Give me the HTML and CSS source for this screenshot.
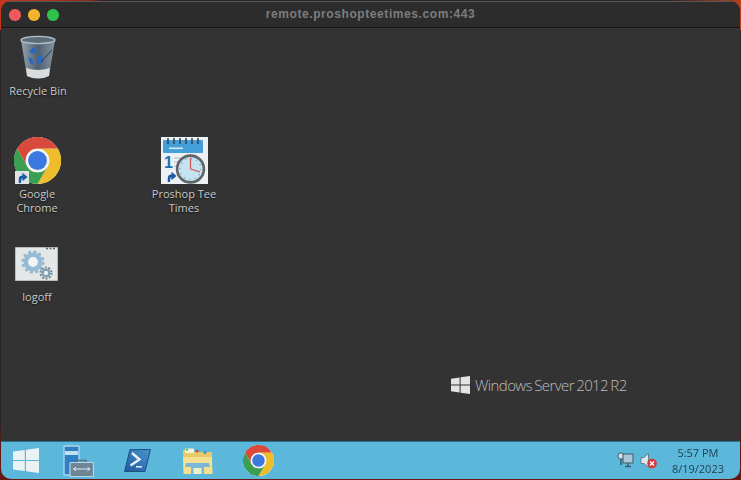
FILE: index.html
```html
<!DOCTYPE html>
<html lang="en">
<head>
    <meta charset="UTF-8">
    <title>remote.proshopteetimes.com:443</title>
    <link rel="stylesheet" href="styles.css">
</head>
<body>
    <svg class="defs" width="0" height="0">
        <symbol id="chrome" viewBox="0 0 48 48">
            <circle cx="24" cy="24" r="24" fill="#fff"/>
            <path d="M3.2 12A24 24 0 0 1 44.8 12H24A12 12 0 0 0 13.6 30Z" fill="#d94a3c"/>
            <path d="M44.8 12A24 24 0 0 1 24 48L34.4 30A12 12 0 0 0 24 12Z" fill="#eebd2c"/>
            <path d="M3.2 12L13.6 30A12 12 0 0 0 34.4 30L24 48A24 24 0 0 1 3.2 12Z" fill="#3a9f50"/>
            <circle cx="24" cy="24" r="12" fill="#f4f4f4"/>
            <circle cx="24" cy="24" r="9.6" fill="#3b78e0"/>
        </symbol>
        <symbol id="shortcut" viewBox="0 0 14 14">
            <path d="M3.5 13V8.5C3.5 6 5.2 4.8 7.5 4.8V2L13 6.5L7.5 11V8.2C6.4 8.2 6 9.5 6 13Z" fill="#1d5aa6"/>
        </symbol>
    </svg>

    <div class="window">
        <header class="titlebar">
            <div class="lights">
                <span class="light red"></span>
                <span class="light amber"></span>
                <span class="light green"></span>
            </div>
            <h1>remote.proshopteetimes.com:443</h1>
        </header>

        <main class="desktop">
            <!-- desktop icons sit wherever the user dropped them -->
            <div class="icon icon-bin">
                <svg width="38" height="46" viewBox="0 0 38 46">
                    <defs>
                        <linearGradient id="binBody" x1="0" x2="1" y1="0" y2="0">
                            <stop offset="0" stop-color="#95a4ae"/>
                            <stop offset=".5" stop-color="#4f6072"/>
                            <stop offset="1" stop-color="#87959f"/>
                        </linearGradient>
                    </defs>
                    <path d="M2 5L8 41Q19 46 30 41L36 5Z" fill="url(#binBody)"/>
                    <path d="M7 33Q19 37 31 33L30 41Q19 46 8 41Z" fill="#d8dcde"/>
                    <path d="M10 17L14 12L18 15L15 19ZM18 22L23 20L24 27L19 29ZM9 22L13 24L15 30L11 28Z" fill="#2a66c4"/>
                    <path d="M22 27L33 15" stroke="#2f3a44" stroke-width="1"/>
                    <ellipse cx="19" cy="5" rx="17" ry="3.6" fill="#5c6c7a" stroke="#b4c0c8" stroke-width="1.4"/>
                </svg>
                <span>Recycle Bin</span>
            </div>

            <div class="icon icon-chrome">
                <div class="icon-art">
                    <svg class="chrome-big"><use href="#chrome"/></svg>
                    <div class="badge-box">
                        <svg class="badge"><use href="#shortcut"/></svg>
                    </div>
                </div>
                <span>Google<br>Chrome</span>
            </div>

            <div class="icon icon-tee">
                <div class="icon-art">
                    <svg width="47" height="47" viewBox="0 0 47 47">
                        <rect width="47" height="47" fill="#eef1f3"/>
                        <rect x="2" y="3" width="40" height="13" rx="1" fill="#45a0da"/>
                        <path d="M7 1V7M13 1V7M19 1V7M25 1V7M31 1V7M37 1V7" stroke="#33424e" stroke-width="1.5"/>
                        <rect x="8" y="10.5" width="14" height="1.6" fill="#d5ecf8"/>
                        <path d="M13 21H26M13 25H18M13 29H17" stroke="#c3cad0" stroke-width="1.4"/>
                        <text x="3" y="31" class="cal-day">1</text>
                        <circle cx="29.5" cy="32" r="13.4" fill="#c4e2f0" stroke="#5f6468" stroke-width="2.6"/>
                        <circle cx="29.5" cy="32" r="10.5" fill="none" stroke="#7f98a8" stroke-width="1.4" stroke-dasharray="1 4.5"/>
                        <path d="M29.5 32V21M29.5 32L39 35" stroke="#d0574e" stroke-width="1.2"/>
                    </svg>
                    <svg class="badge plain"><use href="#shortcut"/></svg>
                </div>
                <span>Proshop Tee<br>Times</span>
            </div>

            <div class="icon icon-logoff">
                <svg width="43" height="34" viewBox="0 0 43 34">
                    <rect width="43" height="34" fill="#e4e7e8" stroke="#8b9094" stroke-width="1"/>
                    <path d="M31 1.5H41" stroke="#60666a" stroke-width="1.4" stroke-dasharray="2 1.5"/>
                    <circle cx="18" cy="15" r="10.3" fill="none" stroke="#9db6c8" stroke-width="2.6" stroke-dasharray="3 2.4"/>
                    <circle cx="18" cy="15" r="7.2" fill="#f2f5f6" stroke="#94bcd8" stroke-width="4.6"/>
                    <circle cx="31" cy="26" r="3.4" fill="#e8eef0" stroke="#7f9eb4" stroke-width="2.4"/>
                    <circle cx="31" cy="26" r="5.6" fill="none" stroke="#74858f" stroke-width="1.8" stroke-dasharray="2 1.5"/>
                </svg>
                <span>logoff</span>
            </div>

            <div class="brand">
                <svg width="19" height="18" viewBox="0 0 19 18">
                    <path d="M0 2.8L8.6 1.4V8.5H0ZM9.6 1.2L19 0V8.5H9.6ZM0 9.5H8.6V16.6L0 15.2ZM9.6 9.5H19V18L9.6 16.8Z" fill="#e4e4e4"/>
                </svg>
                <span>Windows Server 2012 R2</span>
            </div>
        </main>

        <footer class="taskbar">
            <svg class="start" width="26" height="25" viewBox="0 0 26 25">
                <path d="M0 3.6L11.8 2V12H0ZM13 1.8L26 0V12H13ZM0 13H11.8V23L0 21.4ZM13 13H26V25L13 23.2Z" fill="#eaf2f4"/>
            </svg>

            <svg class="server" width="31" height="32" viewBox="0 0 31 32">
                <rect x="1" y="1" width="15" height="29" rx="1" fill="#2f7fc4" stroke="#a6d8ee" stroke-width="1.4"/>
                <rect x="2" y="6" width="13" height="4" fill="#bfe2f2"/>
                <path d="M14 18V15.5H23V18" fill="none" stroke="#5b6e7c" stroke-width="1.6"/>
                <rect x="7" y="17.5" width="23.5" height="14" rx="1" fill="#6e8596" stroke="#b9d6e4" stroke-width="1.2"/>
                <path d="M10.5 24H27M10.5 24L13 22.2M10.5 24L13 25.8M27 24L24.5 22.2M27 24L24.5 25.8" stroke="#dfeaf0" stroke-width="1" fill="none"/>
            </svg>

            <svg class="shell" width="27" height="23" viewBox="0 0 27 23">
                <defs>
                    <linearGradient id="shellFill" x1="0" x2="1" y1="1" y2="0">
                        <stop offset="0" stop-color="#1f5a9e"/>
                        <stop offset="1" stop-color="#4b94d0"/>
                    </linearGradient>
                </defs>
                <path d="M6 0.6H26.4L21 22.4H0.6Z" fill="url(#shellFill)" stroke="#1a4d80" stroke-width="1"/>
                <path d="M8 4L15.5 10.5L6.5 16.5" fill="none" stroke="#e8f2f8" stroke-width="2.4"/>
                <path d="M12 17.8H18" stroke="#e8f2f8" stroke-width="1.6"/>
            </svg>

            <svg class="explorer" width="31" height="28" viewBox="0 0 31 28">
                <path d="M1 3H11L13 5H30V26H2Z" fill="#e8c96c"/>
                <path d="M3 1.5H12V6H3Z" fill="#f4f1d8"/>
                <circle cx="5" cy="2.6" r="1.2" fill="#59b44a"/>
                <circle cx="15" cy="4.2" r="1.4" fill="#c9463a"/>
                <circle cx="23" cy="5.6" r="1.4" fill="#3e86c8"/>
                <path d="M1 10H30L30.5 27H1.5Z" fill="#f5e08f"/>
                <path d="M4 16H27L28 20H22V27H9V20H3Z" fill="#7db7d6"/>
                <rect x="11.5" y="21" width="8" height="6" fill="#e9f1c9"/>
            </svg>

            <svg class="chrome-small"><use href="#chrome"/></svg>

            <div class="tray">
                <svg width="17" height="17" viewBox="0 0 17 17">
                    <circle cx="4" cy="4" r="3.2" fill="#cfdfe6" stroke="#3f5a68" stroke-width="1"/>
                    <path d="M4 7V13" stroke="#3f5a68" stroke-width="1.6"/>
                    <rect x="6" y="2" width="10" height="9" fill="#a9c6d4" stroke="#3f5a68" stroke-width="1"/>
                    <path d="M8 14.5H14M11 11V14.5" stroke="#3f5a68" stroke-width="1.4"/>
                </svg>
                <svg width="17" height="17" viewBox="0 0 17 17">
                    <path d="M1 5.5H4L8.5 1.5V15.5L4 11.5H1Z" fill="#dbe6ea" stroke="#55707e" stroke-width=".8"/>
                    <circle cx="12" cy="11.5" r="4.8" fill="#d8383a"/>
                    <path d="M10 9.5L14 13.5M14 9.5L10 13.5" stroke="#fff" stroke-width="1.3"/>
                </svg>
                <div class="clock">
                    <span>5:57 PM</span>
                    <span>8/19/2023</span>
                </div>
            </div>
        </footer>
    </div>
</body>
</html>
```

FILE: styles.css
```css
html, body {
    margin: 0;
    padding: 0;
    height: 100%;
    overflow: hidden;
}
body {
    background: linear-gradient(90deg, #c23a1e 0, #8f2a18 12%, #2a2224 14%, #2a2224 90%, #b8401c 100%) top / 100% 30px no-repeat,
        linear-gradient(#2c2426 0, #2c2426 88%, #6a1612 94%);
    font-family: "Open Sans", "Liberation Sans", sans-serif;
}
.defs {
    position: absolute;
}
.window {
    box-sizing: border-box;
    height: 478px;
    margin: 1px 1px 0 1px;
    display: flex;
    flex-direction: column;
    background-color: #333;
    border-radius: 10px;
    overflow: hidden;
    filter: blur(0.6px);
}
.titlebar {
    flex: 0 0 27px;
    display: flex;
    align-items: center;
    position: relative;
    background-color: #2c2c2c;
    border-top: 1px solid #585858;
    border-bottom: 1px solid #161616;
    box-sizing: border-box;
    height: 28px;
}
.titlebar h1 {
    flex: 1;
    margin: 0 0 2px;
    text-align: center;
    font: bold 12px "Liberation Sans", Arial, sans-serif;
    letter-spacing: 0.58px;
    color: #7d7d7d;
}
.lights {
    position: absolute;
    left: 8px;
    top: 7px;
    display: flex;
    gap: 7.5px;
}
.light {
    width: 11.5px;
    height: 11.5px;
    border-radius: 50%;
}
.light.red { background-color: #ed5a5c; }
.light.amber { background-color: #f2b32e; }
.light.green { background-color: #2fc24a; }

.desktop {
    flex: 1;
    position: relative;
    background-color: #333;
}
.icon {
    position: absolute;
    width: 76px;
    display: flex;
    flex-direction: column;
    align-items: center;
    color: #c9c9c9;
    font-size: 11px;
    line-height: 14px;
    text-align: center;
    text-shadow: 0 1px 2px #111;
}
.icon svg {
    display: block;
}
.icon-art {
    position: relative;
}
.icon-bin { left: -1px; top: 7px; }
.icon-bin span { margin-top: 3px; }
.icon-chrome { left: -2px; top: 109px; }
.icon-chrome span, .icon-tee span { margin-top: 3px; }
.icon-tee { left: 145px; top: 109px; }
.icon-logoff { left: -2px; top: 219px; }
.icon-logoff span { margin-top: 9px; }
.icon-logoff svg { margin-right: 2px; }
.chrome-big {
    width: 47px;
    height: 47px;
}
.badge-box {
    position: absolute;
    left: 1px;
    bottom: 0;
    width: 14px;
    height: 13px;
    background-color: #dfe3e6;
}
.badge {
    width: 14px;
    height: 13px;
}
.badge.plain {
    position: absolute;
    left: 3px;
    bottom: 1px;
}
.cal-day {
    font: bold 16px "Liberation Sans", Arial, sans-serif;
    fill: #1d6fb0;
    text-shadow: none;
}
.brand {
    position: absolute;
    left: 450px;
    top: 347px;
    display: flex;
    align-items: center;
    gap: 5px;
    color: #bdbdbd;
    font-size: 15px;
    font-weight: 300;
    letter-spacing: -0.6px;
    word-spacing: -1px;
}

.taskbar {
    flex: 0 0 38px;
    display: flex;
    align-items: center;
    background-color: #5cb8da;
    border-top: 1px solid #2a6f8c;
    box-sizing: border-box;
    height: 38px;
}
.taskbar svg {
    flex: none;
}
.start { margin-left: 12px; }
.server { margin-left: 24px; }
.shell { margin-left: 30px; }
.explorer { margin-left: 31px; }
.chrome-small {
    width: 31px;
    height: 31px;
    margin-left: 30px;
}
.tray {
    margin-left: auto;
    display: flex;
    align-items: center;
    gap: 6px;
    margin-right: 16px;
}
.clock {
    display: flex;
    flex-direction: column;
    align-items: center;
    margin-left: 9px;
    color: #23414f;
    font-size: 11px;
    line-height: 16px;
}
```
